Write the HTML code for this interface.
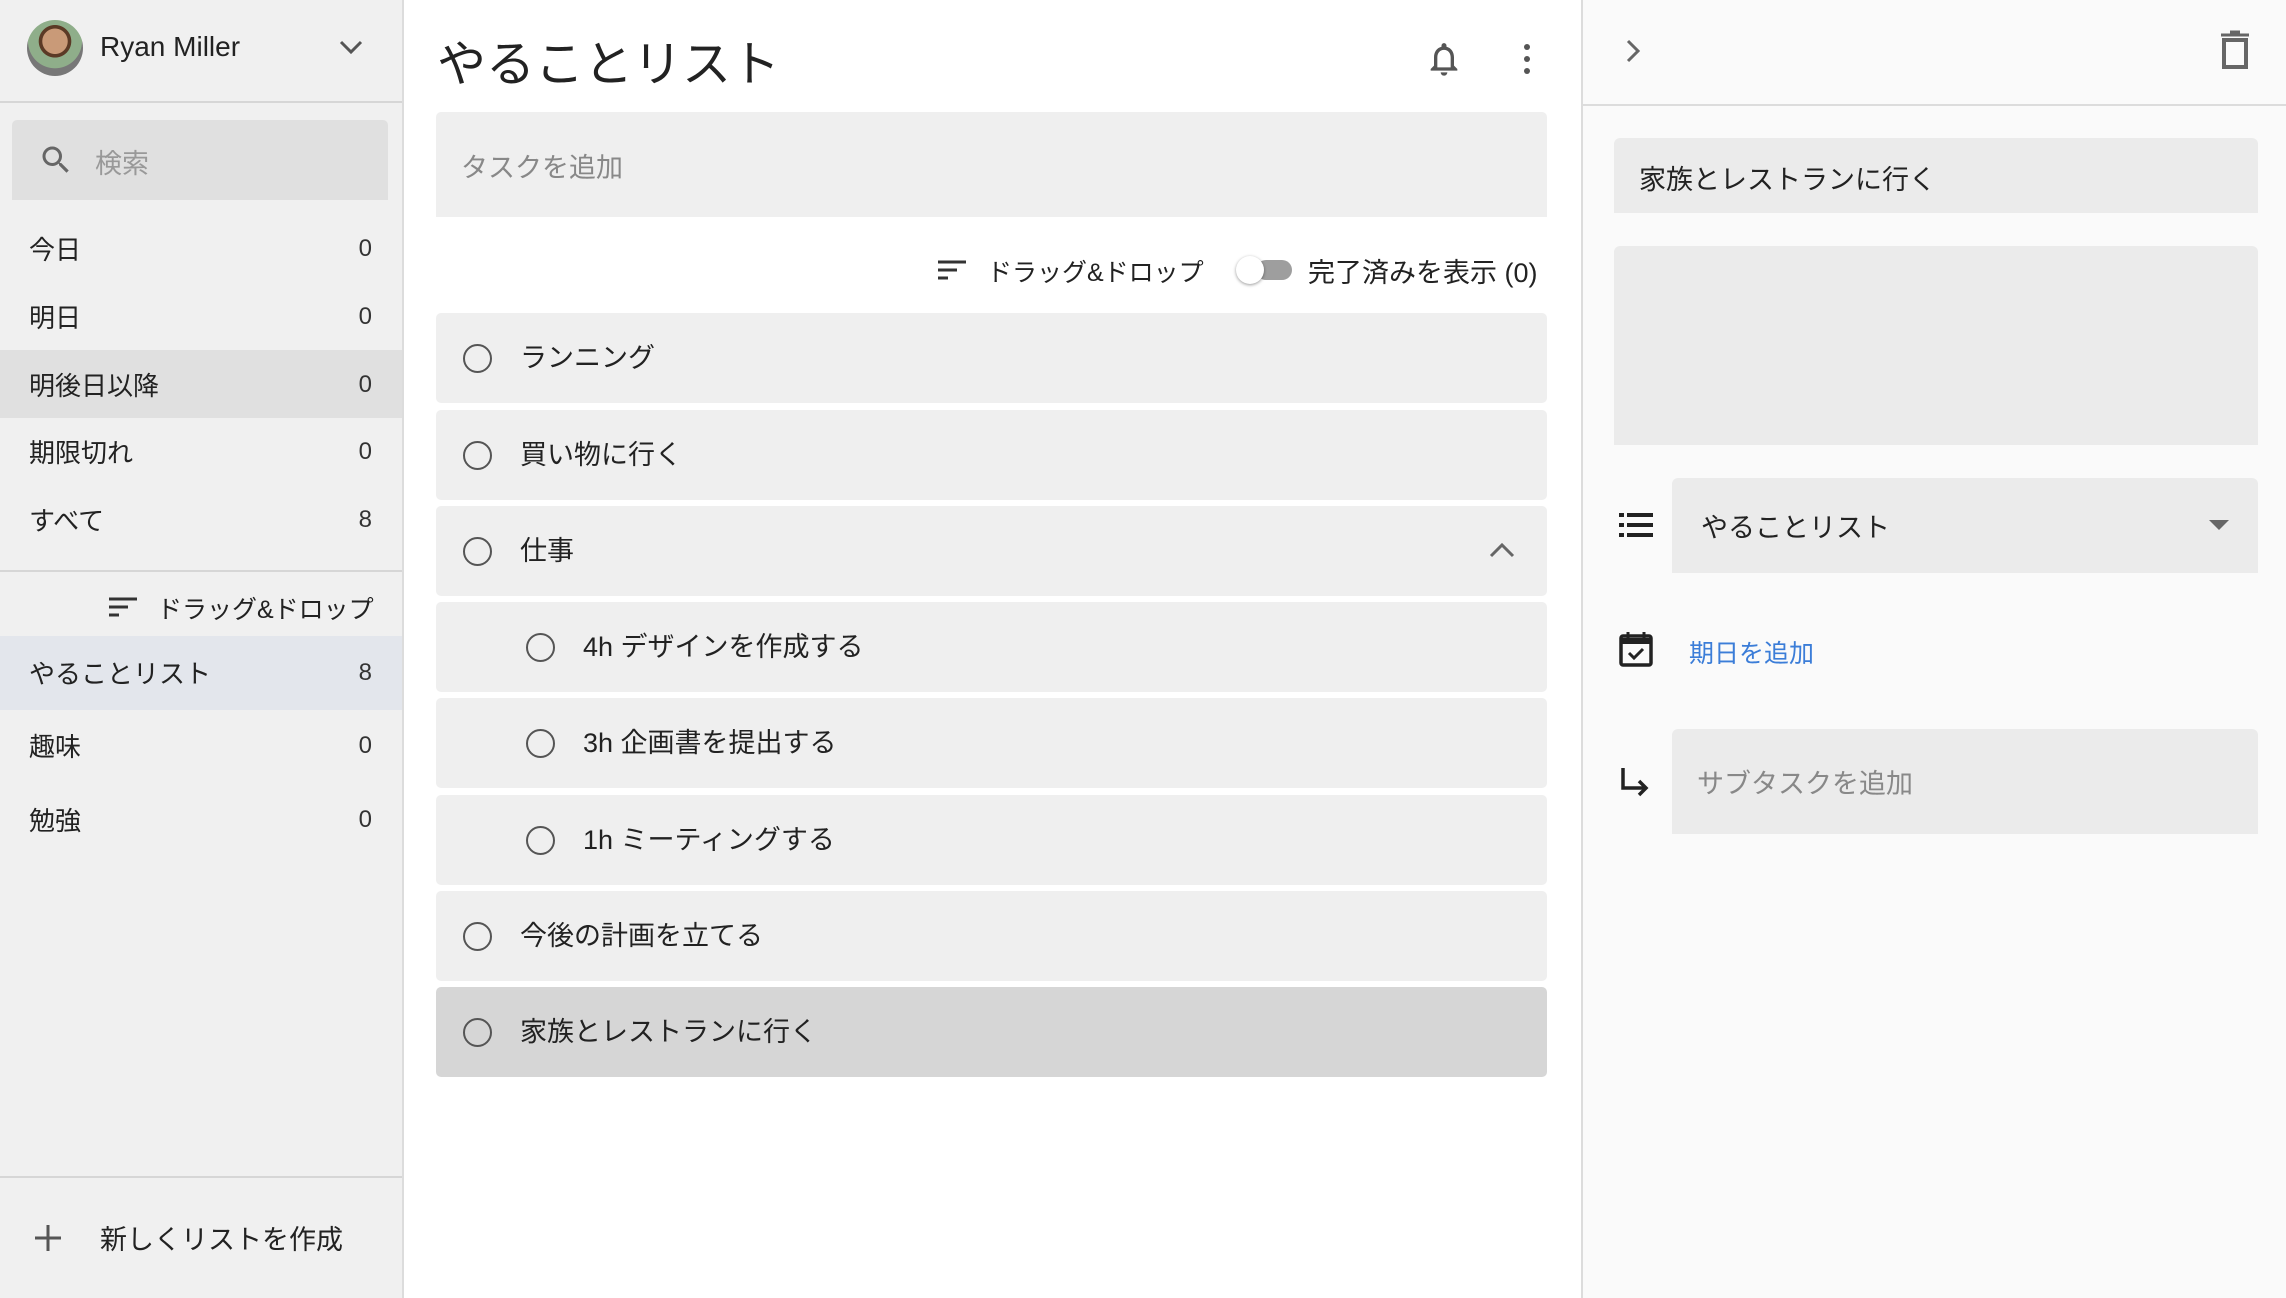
<!DOCTYPE html>
<html><head><meta charset="utf-8"><style>
*{box-sizing:border-box;margin:0;padding:0}
body{width:2286px;height:1298px;overflow:hidden;position:relative;background:#fff;font-family:"Liberation Sans","Noto Sans CJK JP",sans-serif;color:#222}
.a{position:absolute}
.side{left:0;top:0;width:404px;height:1298px;background:#f0f0f0;border-right:2px solid #dcdcdc}
.nav{position:absolute;left:0;width:402px;font-size:26px;color:#222}
.nav span{position:absolute;left:29px}
.nav b{position:absolute;right:30px;font-weight:normal;font-size:24px;color:#333}
.row{position:absolute;left:436px;width:1111px;height:90px;background:#efefef;border-radius:5px}
.row .c{position:absolute;left:27px;top:31px;width:29px;height:29px;border:2.5px solid #555;border-radius:50%}
.row .t{position:absolute;left:84px;top:23px;font-size:27px;color:#222}
.row.s .c{left:90px}.row.s .t{left:147px}
.right{left:1581px;top:0;width:705px;height:1298px;background:#fafafa;border-left:2px solid #dcdcdc}
.fld{position:absolute;background:#ebebeb;border-radius:6px 6px 0 0}
</style></head><body>
<div class="a side">
  <div class="a" style="left:27px;top:20px;width:56px;height:56px;border-radius:50%;background:radial-gradient(circle at 50% 38%,#c99a78 0 28%,#5b3a26 29% 36%,#8fae8a 37% 60%,#777 61%)"></div>
  <div class="a" style="left:100px;top:31px;font-size:28px;color:#222">Ryan Miller</div>
  <svg class="a" style="left:338px;top:38px" width="26" height="20" viewBox="0 0 26 20"><path d="M3 4l10 10 10-10" stroke="#555" stroke-width="3" fill="none"/></svg>
  <div class="a" style="left:0;top:101px;width:402px;height:2px;background:#d6d6d6"></div>
  <div class="a" style="left:12px;top:120px;width:376px;height:80px;background:#e0e0e0;border-radius:5px 5px 0 0"></div>
  <svg class="a" style="left:38px;top:142px" width="36" height="36" viewBox="0 0 24 24"><path fill="#666" d="M15.5 14h-.79l-.28-.27A6.47 6.47 0 0016 9.5 6.5 6.5 0 109.5 16c1.61 0 3.09-.59 4.23-1.57l.27.28v.79l5 4.99L20.49 19l-4.99-5zm-6 0C7.01 14 5 11.99 5 9.5S7.01 5 9.5 5 14 7.01 14 9.5 11.99 14 9.5 14z"/></svg>
  <div class="a" style="left:95px;top:142px;font-size:27px;color:#999">検索</div>
  <div class="nav" style="top:230px;height:68px"><span style="top:0">今日</span><b style="top:5px">0</b></div>
  <div class="nav" style="top:298px"><span style="top:0">明日</span><b style="top:5px">0</b></div>
  <div class="nav" style="top:350px;height:68px;background:#e0e0e0"><span style="top:16px">明後日以降</span><b style="top:21px">0</b></div>
  <div class="nav" style="top:433px"><span>期限切れ</span><b style="top:5px">0</b></div>
  <div class="nav" style="top:501px"><span>すべて</span><b style="top:5px">8</b></div>
  <div class="a" style="left:0;top:570px;width:402px;height:2px;background:#d6d6d6"></div>
  <svg class="a" style="left:108px;top:596px" width="30" height="22" viewBox="0 0 30 22"><path d="M1 3h28M1 11h19M1 19h10" stroke="#333" stroke-width="3"/></svg>
  <div class="a" style="left:157px;top:590px;font-size:25px;color:#222">ドラッグ&amp;ドロップ</div>
  <div class="nav" style="top:636px;height:74px;background:#e3e6ec"><span style="top:18px">やることリスト</span><b style="top:23px">8</b></div>
  <div class="nav" style="top:727px"><span>趣味</span><b style="top:5px">0</b></div>
  <div class="nav" style="top:801px"><span>勉強</span><b style="top:5px">0</b></div>
  <div class="a" style="left:0;top:1176px;width:402px;height:2px;background:#d6d6d6"></div>
  <svg class="a" style="left:34px;top:1224px" width="28" height="28" viewBox="0 0 28 28"><path d="M14 1v26M1 14h26" stroke="#555" stroke-width="3"/></svg>
  <div class="a" style="left:100px;top:1218px;font-size:27px;color:#222">新しくリストを作成</div>
</div>

<div class="a" style="left:437px;top:25px;font-size:49px;color:#222">やることリスト</div>
<svg class="a" style="left:1424px;top:38px" width="40" height="42" viewBox="0 0 24 24"><path fill="#555" d="M12 22c1.1 0 2-.9 2-2h-4a2 2 0 002 2zm6-6v-5c0-3.07-1.64-5.64-4.5-6.32V4a1.5 1.5 0 00-3 0v.68C7.63 5.36 6 7.92 6 11v5l-2 2v1h16v-1l-2-2zm-2 1H8v-6c0-2.48 1.51-4.5 4-4.5s4 2.02 4 4.5v6z"/></svg>
<svg class="a" style="left:1516px;top:42px" width="22" height="34" viewBox="0 0 22 34"><circle cx="11" cy="5" r="3" fill="#555"/><circle cx="11" cy="17" r="3" fill="#555"/><circle cx="11" cy="29" r="3" fill="#555"/></svg>
<div class="a" style="left:436px;top:112px;width:1111px;height:105px;background:#efefef;border-radius:5px 5px 0 0"></div>
<div class="a" style="left:461px;top:146px;font-size:27px;color:#888">タスクを追加</div>

<svg class="a" style="left:937px;top:259px" width="30" height="22" viewBox="0 0 30 22"><path d="M1 3h28M1 11h19M1 19h10" stroke="#333" stroke-width="3"/></svg>
<div class="a" style="left:987px;top:253px;font-size:25px;color:#222">ドラッグ&amp;ドロップ</div>
<div class="a" style="left:1256px;top:260px;width:36px;height:20px;background:#9e9e9e;border-radius:10px"></div>
<div class="a" style="left:1236px;top:256px;width:28px;height:28px;background:#fff;border-radius:50%;box-shadow:0 1px 3px rgba(0,0,0,.4)"></div>
<div class="a" style="left:1308px;top:251px;font-size:27px;color:#222">完了済みを表示 (0)</div>

<div class="row" style="top:313px"><div class="c"></div><div class="t">ランニング</div></div>
<div class="row" style="top:410px"><div class="c"></div><div class="t">買い物に行く</div></div>
<div class="row" style="top:506px"><div class="c"></div><div class="t">仕事</div>
<svg class="a" style="left:1052px;top:34px" width="28" height="20" viewBox="0 0 28 20"><path d="M3 16l11-11 11 11" stroke="#666" stroke-width="3" fill="none"/></svg></div>
<div class="row s" style="top:602px"><div class="c"></div><div class="t">4h デザインを作成する</div></div>
<div class="row s" style="top:698px"><div class="c"></div><div class="t">3h 企画書を提出する</div></div>
<div class="row s" style="top:795px"><div class="c"></div><div class="t">1h ミーティングする</div></div>
<div class="row" style="top:891px"><div class="c"></div><div class="t">今後の計画を立てる</div></div>
<div class="row" style="top:987px;background:#d6d6d6"><div class="c"></div><div class="t">家族とレストランに行く</div></div>

<div class="a right">
  <svg class="a" style="left:41px;top:38px" width="20" height="26" viewBox="0 0 20 26"><path d="M4 3l10 10-10 10" stroke="#666" stroke-width="3" fill="none"/></svg>
  <svg class="a" style="left:635px;top:30px" width="34" height="40" viewBox="0 0 34 40"><path d="M3 5h28M12 2h10" stroke="#666" stroke-width="3"/><rect x="6" y="10" width="22" height="27" stroke="#666" stroke-width="4" fill="none"/></svg>
  <div class="a" style="left:0;top:104px;width:705px;height:2px;background:#dcdcdc"></div>
  <div class="fld" style="left:31px;top:138px;width:644px;height:75px"></div>
  <div class="a" style="left:56px;top:158px;font-size:27px;color:#222">家族とレストランに行く</div>
  <div class="fld" style="left:31px;top:246px;width:644px;height:199px"></div>
  <svg class="a" style="left:35px;top:512px" width="36" height="26" viewBox="0 0 36 26"><path d="M1 3h5M1 13h5M1 23h5M9 3h26M9 13h26M9 23h26" stroke="#222" stroke-width="4"/></svg>
  <div class="fld" style="left:89px;top:478px;width:586px;height:95px"></div>
  <div class="a" style="left:118px;top:506px;font-size:27px;color:#222">やることリスト</div>
  <svg class="a" style="left:625px;top:518px" width="22" height="14" viewBox="0 0 22 14"><path d="M1 2h20L11 12z" fill="#666"/></svg>
  <svg class="a" style="left:36px;top:630px" width="34" height="38" viewBox="0 0 34 38"><rect x="2" y="6" width="30" height="29" rx="2" stroke="#222" stroke-width="3.5" fill="none"/><path d="M2 11h30" stroke="#222" stroke-width="6"/><path d="M9 2v6M25 2v6" stroke="#222" stroke-width="3"/><path d="M10 23l5 5 9-9" stroke="#222" stroke-width="3" fill="none"/></svg>
  <div class="a" style="left:106px;top:634px;font-size:25px;color:#3b7dd8">期日を追加</div>
  <svg class="a" style="left:37px;top:766px" width="30" height="32" viewBox="0 0 30 32"><path d="M3 2v20h22" stroke="#222" stroke-width="3.5" fill="none"/><path d="M19 15l7 7-7 7" stroke="#222" stroke-width="3.5" fill="none"/></svg>
  <div class="fld" style="left:89px;top:729px;width:586px;height:105px"></div>
  <div class="a" style="left:114px;top:762px;font-size:27px;color:#888">サブタスクを追加</div>
</div>
</body></html>
